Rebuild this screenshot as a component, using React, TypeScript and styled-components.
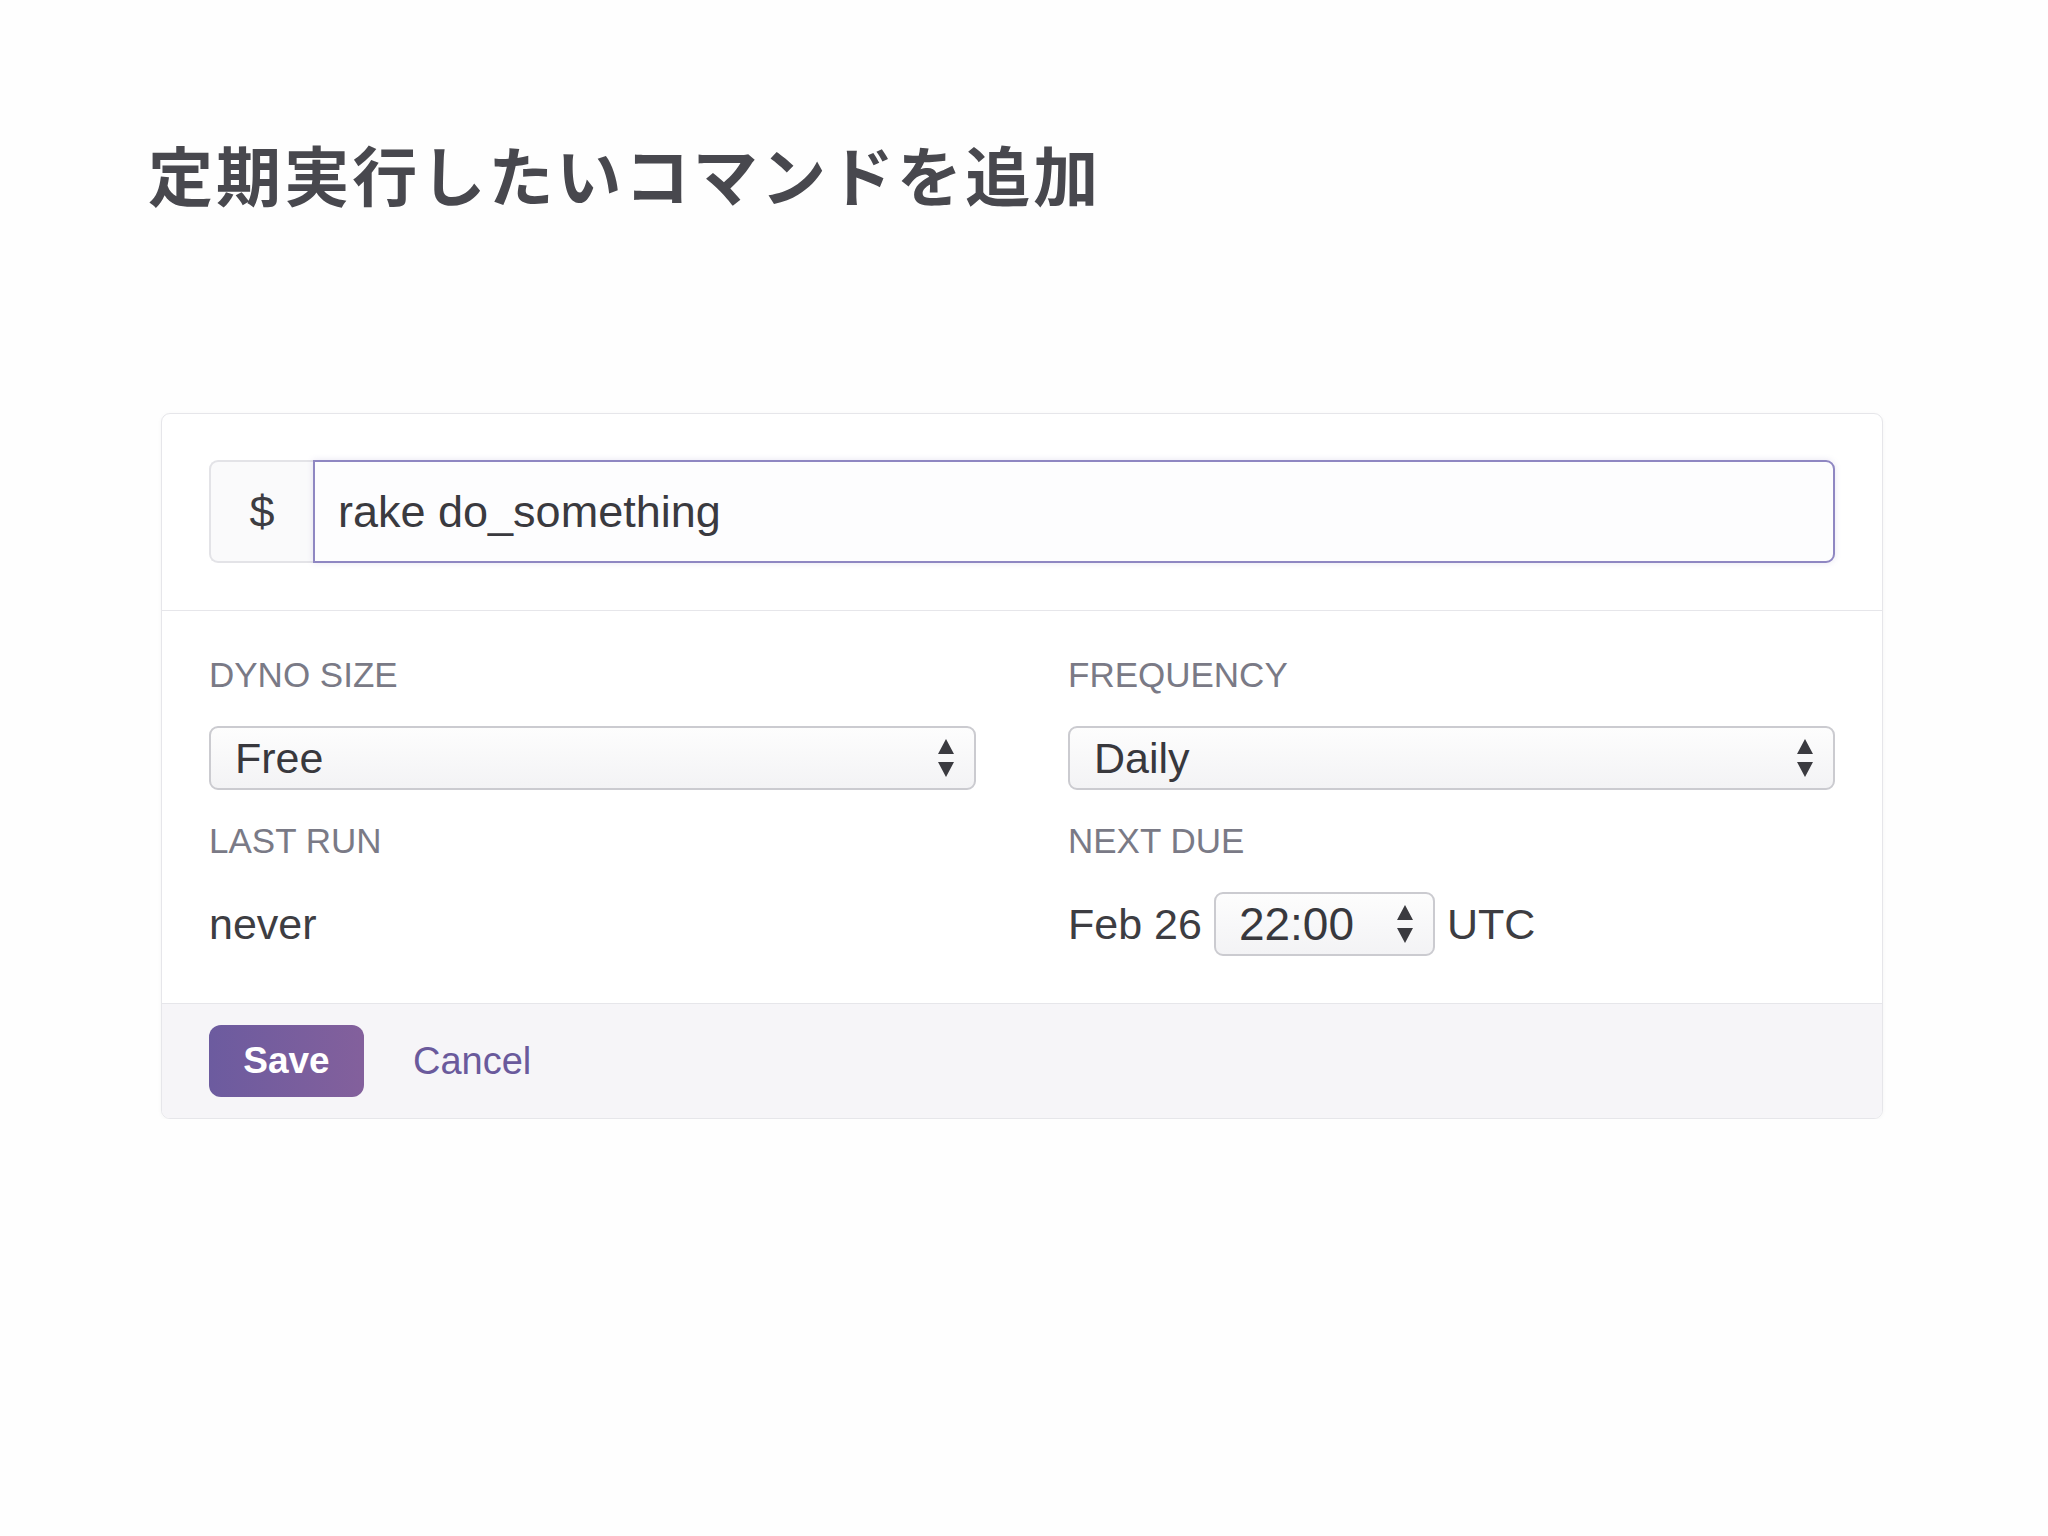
import * as React from "react";
import styled, { createGlobalStyle } from "styled-components";

const GlobalStyle = createGlobalStyle`
  html, body {
    margin: 0;
    padding: 0;
    background: #fefefe;
  }
  * {
    box-sizing: border-box;
  }
`;

const sans = `"Liberation Sans", Arial, sans-serif`;

const Page = styled.div`
  padding: 138px 165px 0 148px;
  font-family: ${sans};
  color: #3d3d42;
`;

const Title = styled.h1`
  margin: 0;
  font-family: "Noto Sans CJK JP", "Noto Sans", sans-serif;
  font-size: 65px;
  line-height: 70px;
  letter-spacing: 3.1px;
  font-weight: 700;
  color: #48484e;
`;

const Card = styled.section`
  margin: 205px 0 0 13px;
  background: #ffffff;
  border: 1px solid #e6e6ea;
  border-radius: 9px;
  box-shadow: 0 1px 4px rgba(0, 0, 0, 0.04);
  overflow: hidden;
`;

const CommandSection = styled.div`
  padding: 46px 47px 47px 47px;
  border-bottom: 1px solid #e6e6ea;
`;

const InputGroup = styled.div`
  display: flex;
  height: 103px;
`;

const Addon = styled.span`
  display: flex;
  align-items: center;
  justify-content: center;
  width: 104px;
  flex: none;
  background: #fafafb;
  border: 2px solid #e3e3e7;
  border-right: none;
  border-radius: 9px 0 0 9px;
  font-size: 45px;
  color: #3d3d42;
`;

const CommandInput = styled.input`
  flex: 1;
  min-width: 0;
  height: 100%;
  padding: 0 0 0 23px;
  border: 2px solid #8f87c2;
  border-radius: 0 9px 9px 0;
  background: #fdfdfe;
  box-shadow: 0 0 6px rgba(120, 104, 180, 0.18);
  font-family: ${sans};
  font-size: 45px;
  color: #3a3a3f;
  outline: none;
`;

const Fields = styled.div`
  display: grid;
  grid-template-columns: 1fr 1fr;
  grid-template-rows: 42px 64px 42px 64px;
  column-gap: 92px;
  row-gap: 30px;
  padding: 43px 47px 47px 47px;
`;

const Label = styled.div`
  font-size: 35px;
  line-height: 42px;
  color: #7a7a86;
  text-transform: uppercase;
`;

const SelectWrap = styled.div<{ $width?: number }>`
  position: relative;
  width: ${(p) => (p.$width ? `${p.$width}px` : "100%")};
  height: 64px;
  flex: none;
`;

const Select = styled.select<{ $size: number; $pad: number }>`
  appearance: none;
  -webkit-appearance: none;
  width: 100%;
  height: 100%;
  padding: 0 50px 0 ${(p) => p.$pad}px;
  border: 2px solid #cbcbd0;
  border-radius: 9px;
  background: linear-gradient(#fdfdfd, #f3f3f5);
  font-family: ${sans};
  font-size: ${(p) => p.$size}px;
  color: #38383d;
  outline: none;
`;

const Arrows = styled.svg`
  position: absolute;
  right: 21px;
  top: 50%;
  transform: translateY(-50%);
  pointer-events: none;
`;

const Value = styled.div`
  display: flex;
  align-items: center;
  gap: 12px;
  font-size: 43px;
  color: #3d3d42;
`;

const Footer = styled.div`
  display: flex;
  align-items: center;
  padding: 21px 47px;
  background: #f6f5f8;
  border-top: 1px solid #e6e6ea;
`;

const SaveButton = styled.button`
  width: 155px;
  height: 72px;
  border: none;
  border-radius: 12px;
  background: linear-gradient(to right, #6c5b9f, #83609c);
  color: #ffffff;
  font-family: ${sans};
  font-size: 37px;
  font-weight: 700;
  cursor: pointer;
`;

const CancelLink = styled.a`
  margin-left: 49px;
  font-size: 38px;
  color: #6a5a9c;
  text-decoration: none;
  cursor: pointer;
`;

const UpDown = () => (
  <Arrows width="18" height="38" viewBox="0 0 18 38">
    <path d="M9 0 L17 15 L1 15 Z" fill="#3b3b40" />
    <path d="M1 23 L17 23 L9 38 Z" fill="#3b3b40" />
  </Arrows>
);

export default function App() {
  return (
    <Page>
      <GlobalStyle />
      <Title>定期実行したいコマンドを追加</Title>
      <Card>
        <CommandSection>
          <InputGroup>
            <Addon>$</Addon>
            <CommandInput defaultValue="rake do_something" />
          </InputGroup>
        </CommandSection>
        <Fields>
          <Label>Dyno Size</Label>
          <Label>Frequency</Label>
          <SelectWrap>
            <Select $size={43} $pad={24} defaultValue="free">
              <option value="free">Free</option>
            </Select>
            <UpDown />
          </SelectWrap>
          <SelectWrap>
            <Select $size={43} $pad={24} defaultValue="daily">
              <option value="daily">Daily</option>
            </Select>
            <UpDown />
          </SelectWrap>
          <Label>Last Run</Label>
          <Label>Next Due</Label>
          <Value>never</Value>
          <Value>
            <span>Feb 26</span>
            <SelectWrap $width={221}>
              <Select $size={46} $pad={23} defaultValue="22:00">
                <option value="22:00">22:00</option>
              </Select>
              <UpDown />
            </SelectWrap>
            <span>UTC</span>
          </Value>
        </Fields>
        <Footer>
          <SaveButton type="button">Save</SaveButton>
          <CancelLink>Cancel</CancelLink>
        </Footer>
      </Card>
    </Page>
  );
}
